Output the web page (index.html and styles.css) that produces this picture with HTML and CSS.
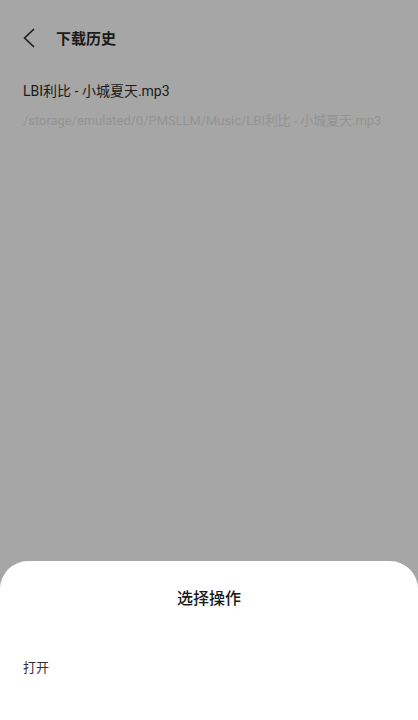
FILE: index.html
```html
<!DOCTYPE html>
<html lang="zh-CN">
<head>
<meta charset="utf-8">
<title>下载历史</title>
<link rel="stylesheet" href="styles.css">
</head>
<body>
<div class="page">
  <header class="topbar">
    <svg class="back" width="14" height="20" viewBox="0 0 14 20">
      <path d="M11.5 1.5 L2.5 10 L11.5 18.5" fill="none" stroke="#1c1c1c" stroke-width="1.7" stroke-linecap="round" stroke-linejoin="round"/>
    </svg>
    <h1 class="title">下载历史</h1>
  </header>
  <div class="item">
    <div class="item-name">LBI利比 - 小城夏天.mp3</div>
    <div class="item-path">/storage/emulated/0/PMSLLM/Music/LBI利比 - 小城夏天.mp3</div>
  </div>
</div>
<div class="sheet">
  <div class="sheet-title">选择操作</div>
  <div class="sheet-option">打开</div>
</div>
</body>
</html>
```
FILE: styles.css
```css
html, body {
  margin: 0;
  padding: 0;
}
body {
  width: 418px;
  height: 720px;
  background: #a6a6a6;
  font-family: Roboto, "Noto Sans CJK SC", sans-serif;
  overflow: hidden;
  position: relative;
}
.page {
  display: flex;
  flex-direction: column;
}
.topbar {
  height: 76px;
  display: flex;
  align-items: center;
  padding-left: 22px;
}
.back {
  display: block;
  margin-right: 20px;
}
.title {
  margin: 0;
  font-family: "Noto Sans CJK SC", sans-serif;
  font-size: 15px;
  font-weight: 600;
  color: #1a1a1a;
  line-height: 20px;
}
.item {
  padding: 5px 23px 0;
  display: flex;
  flex-direction: column;
}
.item-name {
  font-size: 14px;
  line-height: 20px;
  color: #1a1a1a;
  font-weight: 400;
  height: 20px;
}
.item-path {
  margin-top: 10px;
  font-size: 12.9px;
  line-height: 20px;
  color: #939393;
  white-space: nowrap;
}
.sheet {
  position: absolute;
  left: 0;
  right: 0;
  bottom: 0;
  height: 159px;
  background: #ffffff;
  border-radius: 28px 28px 0 0;
  display: flex;
  flex-direction: column;
}
.sheet-title {
  margin-top: 26px;
  text-align: center;
  font-family: "Noto Sans CJK SC", sans-serif;
  font-size: 16px;
  font-weight: 500;
  line-height: 20px;
  color: #1a1a1a;
}
.sheet-option {
  margin-top: 50px;
  padding-left: 23px;
  font-family: "Noto Sans CJK SC", sans-serif;
  font-size: 13px;
  line-height: 20px;
  color: #333333;
}
```
